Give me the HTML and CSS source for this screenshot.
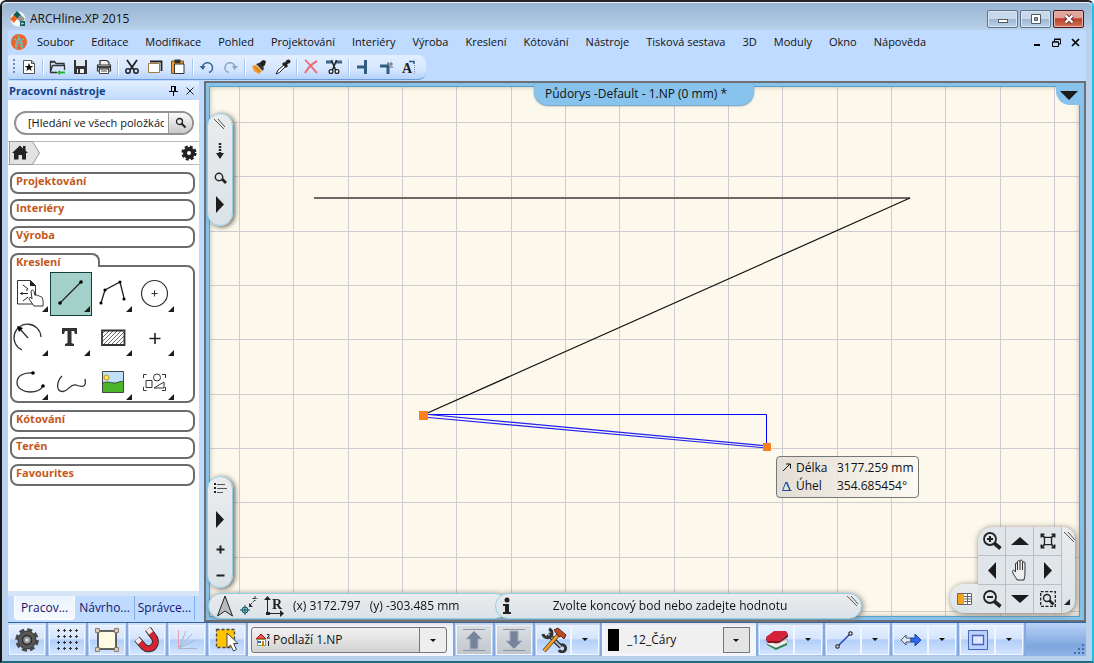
FILE: index.html
```html
<!DOCTYPE html>
<html lang="cs">
<head>
<meta charset="utf-8">
<title>ARCHline.XP 2015</title>
<link rel="stylesheet" href="styles.css">
</head>
<body>
<div class="window">
  <header class="titlebar">
    <svg class="app-icon" width="16" height="16" viewBox="0 0 16 16"><circle cx="8" cy="8" r="7.5" fill="#f4f6f6"/><path d="M7 0l4 4-4 4-4-4z" fill="#0d5c5c"/><path d="M4 4l4 4-4 4-4-4z" fill="#ef6420"/><path d="M11 4l4 4-4 4-4-4z" fill="#8c9494"/><path d="M7 8l4 4-3 3-4-3z" fill="#fff"/><path d="M10 10h5v5h-5z" fill="#145a5a"/><path d="M12 11v3M11 12.500h3" stroke="#9cc" stroke-width="1"/></svg>
    <h1 class="title">ARCHline.XP 2015</h1>
    <div class="win-buttons">
      <button class="win-btn" aria-label="Minimalizovat"><svg width="12" height="10" viewBox="0 0 12 10"><rect x="1.500" y="5.500" width="9" height="3" fill="#fff" stroke="#555b66"/></svg></button>
      <button class="win-btn" aria-label="Maximalizovat"><svg width="12" height="10" viewBox="0 0 12 10"><path d="M1.500.500h9v9h-9z" fill="#fff" stroke="#555b66"/><path d="M4.500 3.500h3v3h-3z" fill="#8fa9c8" stroke="#555b66"/></svg></button>
      <button class="win-btn win-close" aria-label="Zavřít"><svg width="14" height="10" viewBox="0 0 14 10"><path d="M3.500 1.500l7 7M10.500 1.500l-7 7" stroke="#5d3030" stroke-width="4"/><path d="M3.500 1.500l7 7M10.500 1.500l-7 7" stroke="#fff" stroke-width="2.400"/></svg></button>
    </div>
  </header>

  <nav class="menubar">
    <svg class="brand" width="16" height="16" viewBox="0 0 16 16"><circle cx="8" cy="8" r="8" fill="#ee6422"/><path d="M8 1v3M8 4L5 9v6M8 4l3 5v6M5 9h6M6 6h4M4 12h3M9 12h3M3 5l2 1M13 5l-2 1" stroke="#6fb9c0" stroke-width="1.500" fill="none"/></svg>
    <button class="menu">Soubor</button><button class="menu">Editace</button><button class="menu">Modifikace</button><button class="menu">Pohled</button><button class="menu">Projektování</button><button class="menu">Interiéry</button><button class="menu">Výroba</button><button class="menu">Kreslení</button><button class="menu">Kótování</button><button class="menu">Nástroje</button><button class="menu">Tisková sestava</button><button class="menu">3D</button><button class="menu">Moduly</button><button class="menu">Okno</button><button class="menu">Nápověda</button>
    <div class="doc-buttons">
      <button aria-label="Minimalizovat výkres"><svg width="9" height="9" viewBox="0 0 9 9"><path d="M1 6h6v2H1z"/></svg></button>
      <button aria-label="Obnovit výkres"><svg width="9" height="9" viewBox="0 0 9 9"><path d="M2.500 3V1.500h6V6H6.500M2 1h7" stroke="#000" fill="none"/><path d="M.5 4h6v4.500h-6z M.5 3.800h6" stroke="#000" fill="none"/></svg></button>
      <button aria-label="Zavřít výkres"><svg width="9" height="9" viewBox="0 0 9 9"><path d="M1 1l7 7M8 1L1 8" stroke="#000" stroke-width="1.700"/></svg></button>
    </div>
  </nav>

  <div class="toolbar-row">
    <div class="toolbar" role="toolbar" aria-label="Standardní">
      <span class="grip"></span>
      <button class="tb" aria-label="Nový"><svg width="18" height="18" viewBox="0 0 18 18"><path d="M3.500 2.500h8l3 3v10h-11zM11.500 2.500v3h3" fill="#fff" stroke="#555"/><path d="M9 5l1.200 3h3l-2.400 2 .9 3L9 11.200 6.300 13l.9-3-2.400-2h3z" fill="#111"/></svg></button>
      <span class="sep"></span>
      <button class="tb" aria-label="Otevřít"><svg width="18" height="18" viewBox="0 0 18 18"><path d="M1.500 14V3.500h4l1.500 2h8V8M1.500 4h4M3.500 7.500h12V12M1.500 14l2-6.500M1 14.500h7" fill="none" stroke="#333" stroke-width="1.300"/><path d="M8 14.500l3-2.500v1.500h5v2h-5V17z" fill="#19bb22"/></svg></button>
      <button class="tb" aria-label="Uložit"><svg width="18" height="18" viewBox="0 0 18 18"><path d="M2 2h13v14H2z" fill="#333"/><path d="M4 2h9v6H4z" fill="#dfe7f0"/><path d="M5 11h7v4H5z" fill="#f4f4f4"/><path d="M6 11h2v4H6z" fill="#333"/></svg></button>
      <button class="tb" aria-label="Tisk"><svg width="18" height="18" viewBox="0 0 18 18"><path d="M5 7V2.500h7l2 2V7M2.500 7h13v6h-2v-3h-9v3h-2z" fill="#eee" stroke="#333" stroke-width="1.200"/><path d="M3 8h12v2H3z" fill="#444"/><path d="M4.500 11h9v4.500h-9zM6 13h6" fill="#fff" stroke="#444"/></svg></button>
      <span class="sep"></span>
      <button class="tb" aria-label="Vyjmout"><svg width="18" height="18" viewBox="0 0 18 18"><path d="M3 2l7 10M13 2L6 12" stroke="#222" stroke-width="1.800"/><circle cx="4" cy="13" r="2.200" fill="none" stroke="#222" stroke-width="1.500"/><circle cx="12" cy="13" r="2.200" fill="none" stroke="#222" stroke-width="1.500"/></svg></button>
      <button class="tb" aria-label="Kopírovat"><svg width="18" height="18" viewBox="0 0 18 18"><path d="M3 3.500h11.500V13" fill="#fff" stroke="#222" stroke-width="1.800"/><path d="M1.500 5.500h11v9h-11z" fill="#fff" stroke="#a57c40"/></svg></button>
      <button class="tb" aria-label="Vložit"><svg width="18" height="18" viewBox="0 0 18 18"><path d="M1.500 3h12v12.500h-12z" fill="#e89c27" stroke="#7e5520"/><path d="M4.500 6h9.500v9.500H4.500z" fill="#fff" stroke="#333"/><path d="M4.500 1.500h6V5h-6z" fill="#333"/></svg></button>
      <span class="sep"></span>
      <button class="tb" aria-label="Zpět"><svg width="18" height="18" viewBox="0 0 18 18"><path d="M3.500 10a5 5 0 1 1 6.500 4.500" fill="none" stroke="#34658e" stroke-width="1.500"/><path d="M.5 8l3.500 4L6.500 8z" fill="#34658e"/></svg></button>
      <button class="tb" aria-label="Znovu"><svg width="18" height="18" viewBox="0 0 18 18"><path d="M13 10a5 5 0 1 0-6.500 4.500" fill="none" stroke="#8aa5c6" stroke-width="1.500"/><path d="M16 8l-3.500 4L10 8z" fill="#8aa5c6"/></svg></button>
      <span class="sep"></span>
      <button class="tb" aria-label="Kopírovat vlastnosti"><svg width="18" height="18" viewBox="0 0 18 18"><path d="M7 6l5-4 3 1-1 4-4 4z" fill="#222"/><path d="M5 6l3-1 5 5-1 3z" fill="#333"/><path d="M1 8l4-1 6 6-3 3-5-3z" fill="#ef9a2a"/><path d="M4 9l5 5" stroke="#c97312"/></svg></button>
      <button class="tb" aria-label="Kapátko"><svg width="18" height="18" viewBox="0 0 18 18"><path d="M2 16l2-4 6-5 1.500 1.500-6 6z" fill="#fff" stroke="#222"/><path d="M9 5l4 4M11 7l3-4" stroke="#222" stroke-width="3"/><circle cx="14.500" cy="3.500" r="2" fill="#222"/></svg></button>
      <span class="sep"></span>
      <button class="tb" aria-label="Smazat"><svg width="18" height="18" viewBox="0 0 18 18"><path d="M2 2c3 2 8 9 12 13M14 3C10 5 5 10 2 15" fill="none" stroke="#ee6d78" stroke-width="2"/></svg></button>
      <button class="tb" aria-label="Oříznout"><svg width="18" height="18" viewBox="0 0 18 18"><path d="M0 4h6M10 4h6" stroke="#3a6586" stroke-width="3"/><path d="M5.500 2l4 10M10.500 2l-4 10" stroke="#222" stroke-width="1.500"/><circle cx="5" cy="13.500" r="1.900" fill="#fff" stroke="#222" stroke-width="1.300"/><circle cx="11" cy="13.500" r="1.900" fill="#fff" stroke="#222" stroke-width="1.300"/></svg></button>
      <span class="sep"></span>
      <button class="tb" aria-label="Prodloužit"><svg width="18" height="18" viewBox="0 0 18 18"><path d="M10.500 2v14M2 9h8" stroke="#2f5c80" stroke-width="3"/></svg></button>
      <button class="tb" aria-label="Spojit"><svg width="18" height="18" viewBox="0 0 18 18"><path d="M2 8h9M10 7v9" stroke="#2f5c80" stroke-width="3"/><path d="M10 4v4M13 4v4M9 6h6M11 9h4" stroke="#667"/></svg></button>
      <button class="tb" aria-label="Upravit text"><svg width="18" height="18" viewBox="0 0 18 18"><text x="1" y="15" class="glyph-a">A</text><path d="M8 3.500h5V6" stroke="#2f5c80" stroke-width="1.500" fill="none"/><path d="M13.500 7v9" stroke="#88a" stroke-dasharray="1 1"/></svg></button>
    </div>
  </div>

  <main class="workspace">
    <aside class="side">
      <div class="side-head"><h2>Pracovní nástroje</h2>
        <button aria-label="Připnout"><svg width="9" height="10" viewBox="0 0 9 10"><path d="M2.500 0v5M2 .5h4M0 5.500h9M4.500 6v4" stroke="#000" fill="none"/><path d="M5 0h2v5H5z"/></svg></button>
        <button aria-label="Zavřít panel"><svg width="8" height="8" viewBox="0 0 8 8"><path d="M.5.500l7 7M7.500.500l-7 7" stroke="#222"/></svg></button>
      </div>
      <div class="side-body">
        <form class="search">
          <input type="text" aria-label="Hledání" value="[Hledání ve všech položkách]">
          <button type="button" aria-label="Hledat"><svg width="12" height="12" viewBox="0 0 12 12"><circle cx="4.500" cy="4.500" r="3" fill="none" stroke="#222" stroke-width="1.300"/><path d="M6.500 6.500l4 4" stroke="#222" stroke-width="2"/></svg></button>
        </form>
        <div class="crumbs">
          <button class="home" aria-label="Domů"><svg width="31" height="24" viewBox="0 0 31 24"><path d="M.5.500h23l7 11.500-7 11.500H.5z" fill="#e3e3e3" stroke="#999"/><path d="M3 12l8-7.500 3 3V5h2.500v4.500L19 12h-2v6.500h-4V14H9.500v4.500H5V12z" fill="#222"/></svg></button>
          <button class="gear-btn" aria-label="Nastavení panelu"><svg width="16" height="16" viewBox="0 0 16 16"><circle cx="8" cy="8" r="4" fill="none" stroke="#222" stroke-width="4"/><circle cx="8" cy="8" r="6.300" fill="none" stroke="#222" stroke-width="2.600" stroke-dasharray="2.900 2.050"/></svg></button>
        </div>
        <button class="pill">Projektování</button>
        <button class="pill">Interiéry</button>
        <button class="pill">Výroba</button>
        <section class="open-group">
          <button class="group-tab">Kreslení</button>
          <div class="tool-grid">
            <button class="tool" aria-label="Výběr"><svg width="42" height="44" viewBox="0 0 42 44"><path d="M9.500 8.500h13l5 5v18.500h-18z" fill="#fff" stroke="#333"/><path d="M22 8v6h6z" fill="#222"/><path d="M15 13l5 4M12 21.500h8M15 29l5-4" stroke="#222"/><path d="M20 18h-2M14 20v3" stroke="#222"/><path d="M26 34l-5-7c0-2 2-2 3 0l-1-8c1-1.500 2.500-1 3 .5l1 4c1-1 2-1 2.500.5 1-1 2-.5 2.500.8 1-.8 2 0 2.300 1.200.7 2 1.200 5 .7 8z" fill="#fff" stroke="#333"/><path class="corner" d="M40 34v6h-6z"/></svg></button>
            <button class="tool selected" aria-label="Úsečka"><svg width="42" height="44" viewBox="0 0 42 44"><path d="M10 31L31 10" stroke="#222" stroke-width="1.300"/><circle cx="10" cy="31" r="1.800"/><circle cx="31" cy="10" r="1.800"/><path class="corner" d="M40 34v6h-6z"/></svg></button>
            <button class="tool" aria-label="Lomená čára"><svg width="42" height="44" viewBox="0 0 42 44"><path d="M9 31l4-13 15-8 4 16" fill="none" stroke="#222" stroke-width="1.300"/><circle cx="9" cy="31" r="1.600"/><circle cx="13" cy="18" r="1.600"/><circle cx="28" cy="10" r="1.600"/><circle cx="32" cy="27" r="1.600"/><path class="corner" d="M40 34v6h-6z"/></svg></button>
            <button class="tool" aria-label="Kružnice"><svg width="42" height="44" viewBox="0 0 42 44"><circle cx="20.500" cy="21.500" r="13" fill="none" stroke="#333" stroke-width="1.200"/><path d="M20.500 18.500v6M17.500 21.500h6" stroke="#333"/><path class="corner" d="M40 34v6h-6z"/></svg></button>
            <button class="tool" aria-label="Oblouk"><svg width="42" height="44" viewBox="0 0 42 44"><path d="M14 34A13.500 13.500 0 1 1 33 21M12 13l8 9" fill="none" stroke="#333" stroke-width="1.300"/><path d="M9 10l6 2-4 4z"/><path class="corner" d="M40 34v6h-6z"/></svg></button>
            <button class="tool" aria-label="Text"><svg width="42" height="44" viewBox="0 0 42 44"><path d="M12 12h15v6h-2l-1-3h-2.500v12l2.500 1v2h-9v-2l2.500-1V15H15l-1 3h-2z" fill="#333"/><path class="corner" d="M40 34v6h-6z"/></svg></button>
            <button class="tool" aria-label="Šrafa"><svg width="42" height="44" viewBox="0 0 42 44"><path d="M10 14.500h22.500v14.500H10z" fill="url(#hatch)" stroke="#333" stroke-width="1.800"/><path class="corner" d="M40 34v6h-6z"/></svg></button>
            <button class="tool" aria-label="Bod"><svg width="42" height="44" viewBox="0 0 42 44"><path d="M21 17v11M15.500 22.500h11" stroke="#222" stroke-width="1.600"/><path class="corner" d="M40 34v6h-6z"/></svg></button>
            <button class="tool" aria-label="Elipsa"><svg width="42" height="44" viewBox="0 0 42 44"><path d="M25 13C14 12 9 17 9 22.500 9 28 15 32 22 32c6 0 11-2 13-6" fill="none" stroke="#333" stroke-width="1.300"/><circle cx="25" cy="13" r="1.800"/><circle cx="35" cy="26" r="1.800"/><path class="corner" d="M40 34v6h-6z"/></svg></button>
            <button class="tool" aria-label="Křivka"><svg width="42" height="44" viewBox="0 0 42 44"><path d="M12 16c-5 5-7 16 1 15.500 6-.5 7-8 13-6.500 5 2 11 3 9-6" fill="none" stroke="#333" stroke-width="1.300"/></svg></button>
            <button class="tool" aria-label="Obrázek"><svg width="42" height="44" viewBox="0 0 42 44"><path d="M10.500 11.500h21v21h-21z" fill="#bfe2fa"/><circle cx="14.500" cy="17.500" r="2.500" fill="#ffe469" stroke="#c29512"/><path d="M10.500 23c6-2 8 0 12 0s6-3 9-1v10.500h-21z" fill="#48b52b"/><path d="M10.500 23c6-2 8 0 12 0s6-3 9-1M10.500 11.500h21v21h-21z" fill="none" stroke="#444"/><path class="corner" d="M40 34v6h-6z"/></svg></button>
            <button class="tool" aria-label="Bloky"><svg width="42" height="44" viewBox="0 0 42 44"><path d="M9.500 18v-3.500h3M28 14.500h3.500V18M9.500 27v3.500h3M28 30.500h3.500V27M12 20.500h6v7h-6z" fill="none" stroke="#333"/><circle cx="23" cy="17.500" r="3.500" fill="none" stroke="#333"/><path d="M20 28h10v-6z" fill="none" stroke="#333"/><path class="corner" d="M40 34v6h-6z"/></svg></button>
          </div>
        </section>
        <button class="pill">Kótování</button>
        <button class="pill">Terén</button>
        <button class="pill">Favourites</button>
      </div>
      <div class="side-tabs">
        <button class="side-tab active">Pracov...</button>
        <button class="side-tab">Návrho...</button>
        <button class="side-tab">Správce...</button>
      </div>
    </aside>

    <section class="canvas">
      <svg class="drawing" width="100%" height="100%">
        <defs>
          <pattern id="grid" width="163" height="163" patternUnits="userSpaceOnUse" x="29" y="35"><path d="M.5 0v163M54.500 0v163M109.500 0v163M0 .5h163M0 54.500h163M0 109.500h163" stroke="#cdcdcf" fill="none"/></pattern>
          <pattern id="hatch" width="4" height="4" patternUnits="userSpaceOnUse"><path d="M-1 1l2-2M0 4l4-4M3 5l2-2" stroke="#444" stroke-width=".8"/></pattern>
        </defs>
        <rect width="100%" height="100%" fill="#fdf8ec"/>
        <rect width="100%" height="100%" fill="url(#grid)"/>
        <g transform="translate(-210 -87)" fill="none">
          <path d="M314 198h596" stroke="#6f6763" stroke-width="2"/>
          <path d="M910 198L423 415" stroke="#111" stroke-width="1.200"/>
          <path d="M423.500 414.500h343v32" stroke="#00f"/>
          <path d="M423 414l344 32M423 417l344 31" stroke="#2222ee" stroke-width="1.200"/>
          <path d="M419 411h9v9h-9zM763 443h8v8h-8z" fill="#f9801c"/>
        </g>
      </svg>

      <div class="view-title">Půdorys -Default - 1.NP (0 mm) *</div>
      <button class="view-menu" aria-label="Nabídka pohledu"><svg width="18" height="9" viewBox="0 0 18 9"><path d="M0 0h18L9 9z" fill="#1c1c1c"/></svg></button>

      <div class="strip strip-top">
        <svg width="12" height="12" viewBox="0 0 12 12"><path d="M0 1l10 10M4 1l7 8" stroke="#555"/></svg>
        <button aria-label="Dolů"><svg width="10" height="18" viewBox="0 0 10 18"><path d="M5 1v12" stroke="#222" stroke-width="2.500" stroke-dasharray="2 1"/><path d="M1 11h8l-4 6z" fill="#222"/></svg></button>
        <button aria-label="Lupa"><svg width="13" height="12" viewBox="0 0 13 12"><circle cx="5" cy="5" r="3.700" fill="none" stroke="#222" stroke-width="1.400"/><path d="M8 7l4 4" stroke="#222" stroke-width="2.800"/></svg></button>
        <button aria-label="Rozbalit"><svg width="8" height="17" viewBox="0 0 8 17"><path d="M0 0l8 8.500L0 17z" fill="#1c1c1c"/></svg></button>
      </div>
      <div class="strip strip-bottom">
        <button aria-label="Seznam"><svg width="13" height="11" viewBox="0 0 13 11"><path d="M0 0h2v2H0zM0 4h2v2H0zM0 8h2v2H0z" fill="#222"/><path d="M3 1.500h8M3 5.500h10M3 9.500h6" stroke="#555"/></svg></button>
        <button aria-label="Rozbalit"><svg width="8" height="17" viewBox="0 0 8 17"><path d="M0 0l8 8.500L0 17z" fill="#1c1c1c"/></svg></button>
        <button aria-label="Přiblížit"><svg width="9" height="9" viewBox="0 0 9 9"><path d="M4.500.500v8M.5 4.500h8" stroke="#222" stroke-width="2"/></svg></button>
        <button aria-label="Oddálit"><svg width="9" height="9" viewBox="0 0 9 9"><path d="M.5 4.500h8" stroke="#222" stroke-width="2"/></svg></button>
      </div>

      <dl class="measure">
        <dt><svg width="12" height="12" viewBox="0 0 12 12"><path d="M2 9l7-7M5 2h4.500v4.500" fill="none" stroke="#111"/></svg>Délka</dt><dd>3177.259 mm</dd>
        <dt><svg width="12" height="12" viewBox="0 0 12 12"><path d="M5 2L1.500 10.500h9M5 2l4 8.500M6 2l3 8" fill="none" stroke="#1a4a9a"/></svg>Úhel</dt><dd>354.685454°</dd>
      </dl>

      <div class="status">
        <div class="coords">
          <svg class="compass" width="18" height="22" viewBox="0 0 18 22"><path d="M9 1l7.500 20L9 16 1.500 21z" fill="#bbb" stroke="#222"/></svg>
          <svg width="22" height="22" viewBox="0 0 22 22"><path d="M12 10l5-5M17 1v5M14.500 3.500h5" stroke="#333" stroke-dasharray="3 1"/><path d="M11 8v4h4z" fill="#333"/><circle cx="7" cy="15" r="3" fill="#9cc" stroke="#156"/><path d="M7 10v10M2 15h10" stroke="#156"/></svg>
          <svg width="20" height="22" viewBox="0 0 20 22"><path d="M3.500 3v15.500H19" fill="none" stroke="#222"/><path d="M0 5l3.500-4L7 5zM16 15l4 3.500-4 3.500zM2 17h4v3H2z" fill="#222"/><text x="8" y="14" class="glyph-r">R</text></svg>
          <span class="xy">(x) 3172.797</span><span>(y) -303.485 mm</span>
        </div>
        <div class="prompt"><svg class="info" width="8" height="18" viewBox="0 0 8 18"><circle cx="4" cy="3" r="2.500" fill="#222"/><path d="M0 7h6v8h2v2H0v-2h2V9H0z" fill="#222"/></svg><p>Zvolte koncový bod nebo zadejte hodnotu</p><svg class="scratch" width="12" height="12" viewBox="0 0 12 12"><path d="M0 1l10 10M4 1l7 8" stroke="#555"/></svg></div>
      </div>

      <div class="navpad">
        <button class="layout-btn" aria-label="Rozvržení"><svg width="15" height="12" viewBox="0 0 15 12"><path d="M.5.500h14v11H.5zM.5 6h14M6.500 0v12M10.500 0v12M7 3.500h8M7 8.500h8" fill="#fff" stroke="#666"/><path d="M1 1h6v10H1z" fill="#f7a21b"/></svg></button>
        <div class="pad">
          <button aria-label="Zvětšit"><svg width="20" height="20" viewBox="0 0 20 20"><circle cx="8" cy="8" r="6" fill="none" stroke="#222" stroke-width="1.800"/><path d="M8 5v6M5 8h6" stroke="#222" stroke-width="2"/><path d="M12.500 12.500l6 5" stroke="#222" stroke-width="3.600"/></svg></button>
          <button aria-label="Nahoru"><svg width="18" height="9" viewBox="0 0 18 9"><path d="M0 8l9-8 9 8z" fill="#1c1c1c"/></svg></button>
          <button aria-label="Celý výkres"><svg width="16" height="16" viewBox="0 0 18 18"><path d="M5 5h8v8H5z" fill="none" stroke="#222" stroke-width="1.500"/><path d="M1.500 5V1.500H5M13 1.500h3.500V5M1.500 13v3.500H5M13 16.500h3.500V13M2 2l3 3M16 2l-3 3M2 16l3-3M16 16l-3-3" fill="none" stroke="#222" stroke-width="1.800"/></svg></button>
          <button aria-label="Vlevo"><svg width="8" height="17" viewBox="0 0 8 17"><path d="M8 0L0 8.500 8 17z" fill="#1c1c1c"/></svg></button>
          <button aria-label="Posun"><svg width="18" height="22" viewBox="0 0 18 22"><path d="M6 21c-1-3-4-5-4.500-8.500C1.500 11 3 10.500 4.500 13V5c0-1.500 2-1.500 2 0V3c0-2 2.500-2 2.500 0v-.5c0-2 2.500-2 2.500 0V4c0-1.500 2.500-1.500 2.500 0v9c0 4-.5 5-1 8zM6.500 5v6M9 3v8M11.500 3v8" fill="#eee" stroke="#333"/></svg></button>
          <button aria-label="Vpravo"><svg width="8" height="17" viewBox="0 0 8 17"><path d="M0 0l8 8.500L0 17z" fill="#1c1c1c"/></svg></button>
          <button aria-label="Zmenšit"><svg width="20" height="20" viewBox="0 0 20 20"><circle cx="8" cy="8" r="6" fill="none" stroke="#222" stroke-width="1.800"/><path d="M5 8h6" stroke="#222" stroke-width="2"/><path d="M12.500 12.500l6 5" stroke="#222" stroke-width="3.600"/></svg></button>
          <button aria-label="Dolů"><svg width="18" height="9" viewBox="0 0 18 9"><path d="M0 0h18L9 8z" fill="#1c1c1c"/></svg></button>
          <button aria-label="Výřez"><svg width="16" height="16" viewBox="0 0 16 16"><path d="M.7.700h14.600v14.600H.7z" fill="none" stroke="#222" stroke-width="1.300" stroke-dasharray="3 1.500"/><circle cx="7" cy="7" r="3.500" fill="none" stroke="#222" stroke-width="1.400"/><path d="M9.500 9.500l4 4" stroke="#222" stroke-width="2.800"/></svg></button>
        </div>
        <div class="pad-edge"><svg width="11" height="12" viewBox="0 0 11 12"><path d="M0 1l10 10M4 1l7 8" stroke="#555"/></svg><svg width="6" height="6" viewBox="0 0 6 6"><path d="M6 0v6H0z" fill="#222"/></svg></div>
      </div>
    </section>
  </main>

  <footer class="bottombar">
    <div class="cell"><button class="bb" aria-label="Nastavení"><svg width="26" height="26" viewBox="0 0 26 26"><circle cx="13" cy="13" r="9" fill="#565656" stroke="#333"/><circle cx="13" cy="13" r="10.200" fill="none" stroke="#484848" stroke-width="3" stroke-dasharray="5 3"/><circle cx="13" cy="13" r="4.500" fill="#8d8d8d" stroke="#2c2c2c" stroke-width="1.500"/><circle cx="13" cy="13" r="1.800" fill="#cfdcec"/></svg></button></div>
    <div class="cell"><button class="bb" aria-label="Rastr"><svg width="24" height="24" viewBox="0 0 24 24"><path d="M3.500 2v20M9.500 2v20M15.500 2v20M21.500 2v20" stroke="#333" stroke-width="3" stroke-dasharray="1 5"/><path d="M3.500 1v21M9.500 1v21M15.500 1v21M21.500 1v21" stroke="#333" stroke-dasharray="3 3"/></svg></button></div>
    <div class="cell"><button class="bb" aria-label="Úchopové body"><svg width="24" height="24" viewBox="0 0 24 24"><path d="M3 3h18v18H3z" fill="#fffbe4" stroke="#333" stroke-width="1.500"/><path d="M.5.500h4v4h-4zM19.500.500h4v4h-4zM.5 19.500h4v4h-4zM19.500 19.500h4v4h-4z" fill="#dacdbf" stroke="#8d7c6d"/></svg></button></div>
    <div class="cell"><button class="bb" aria-label="Magnet"><svg width="26" height="26" viewBox="0 0 26 26"><path d="M3 12l7 8c3 3 8 2 10-1s2-7-1-10l-5-7" fill="none" stroke="#333" stroke-width="7"/><path d="M3 12l7 8c3 3 8 2 10-1s2-7-1-10l-5-7" fill="none" stroke="#d92331" stroke-width="5"/><path d="M3 12l3 3.500M14 2l3 4" stroke="#eee" stroke-width="5"/></svg></button></div>
    <div class="cell"><button class="bb" aria-label="Úhly"><svg width="22" height="22" viewBox="0 0 22 22"><path d="M2.500 1v19" stroke="#e3a5ab"/><path d="M3 19.500h18M3 19L10 2M3 19L16 5M3 19l16-8" stroke="#a9b6c9"/></svg></button></div>
    <div class="cell"><button class="bb" aria-label="Výběr"><svg width="24" height="24" viewBox="0 0 24 24"><path d="M1.500 1.500h18v18h-18z" fill="#ffc400" stroke="#444" stroke-width="1.300" stroke-dasharray="3 2"/><path d="M12 5v15l3.500-3 3 6 3-1.500-3-6h4.500z" fill="#fff" stroke="#444"/></svg></button></div>
    <div class="cell combo-cell"><label class="combo floor"><svg width="15" height="14" viewBox="0 0 15 14"><path d="M0 6l5-5 5 5z" fill="#e55" stroke="#a11"/><path d="M1.500 6.500h8v6h-8z" fill="#fff" stroke="#7a3"/><path d="M2 8h3v2H2z" fill="#36a"/><path d="M6 8h2v5H6z" fill="#c80"/><path d="M11 1.500h2v1.500l-2 2h3M12.500 8v5" fill="none" stroke="#222"/></svg><select aria-label="Podlaží"><option>Podlaží 1.NP</option></select></label></div>
    <div class="cell"><button class="bb dim" aria-label="O podlaží výš"><svg width="24" height="24" viewBox="0 0 24 24"><path d="M1 1.500h22M1 22.500h22" stroke="#8c97a8"/><path d="M12 3l8 8h-4v10H8V11H4z" fill="#76839a" stroke="#a5afbe"/></svg></button></div>
    <div class="cell"><button class="bb dim" aria-label="O podlaží níž"><svg width="24" height="24" viewBox="0 0 24 24"><path d="M1 1.500h22M1 22.500h22" stroke="#8c97a8"/><path d="M12 21l8-8h-4V3H8v10H4z" fill="#76839a" stroke="#a5afbe"/></svg></button></div>
    <div class="cell"><button class="bb" aria-label="Nástroje"><svg width="26" height="26" viewBox="0 0 26 26"><path d="M7 7l13 13" stroke="#222" stroke-width="4.500"/><path d="M7 7l13 13" stroke="#aeb6bf" stroke-width="2"/><path d="M8 2a4.500 4.500 0 1 1-6 5M20 18a3.500 3.500 0 1 1-2 5" fill="none" stroke="#333" stroke-width="3"/><path d="M17 8L3 24" stroke="#6b3b0c" stroke-width="4"/><path d="M17 8L3 24" stroke="#f5a52c" stroke-width="2.500"/><path d="M13 3l4-2 8 7-2 4-3-3-2 1z" fill="#bc4a27" stroke="#5c2715"/></svg></button><button class="drop" aria-label="Další nástroje"></button></div>
    <div class="cell combo-cell"><label class="combo layer"><i class="swatch"></i><select aria-label="Vrstva"><option>_12_Čáry</option></select></label></div>
    <div class="cell"><button class="bb" aria-label="Materiál"><svg width="24" height="22" viewBox="0 0 24 22"><path d="M2 13l9 5 11-5v3l-11 5-9-5z" fill="#1c8a45"/><path d="M2 10l9 5 11-5v4l-11 5-9-4z" fill="#eee" stroke="#777" stroke-width=".5"/><path d="M1 8l8-6h12l2 3-9 7H3z" fill="#d52439"/><path d="M1 8v3l2 3h11l9-6V5l-9 7H3z" fill="#891421"/></svg></button><button class="drop" aria-label="Volby materiálu"></button></div>
    <div class="cell"><button class="bb" aria-label="Typ čáry"><svg width="18" height="18" viewBox="0 0 18 18"><path d="M3 15L15 3" stroke="#2940b8" stroke-width="1.500"/><path d="M1 14h3v3H1zM14 1h3v3h-3z" fill="#fff" stroke="#111"/></svg></button><button class="drop" aria-label="Volby čáry"></button></div>
    <div class="cell"><button class="bb" aria-label="Směr"><svg width="22" height="14" viewBox="0 0 22 14"><path d="M1 7l5-5v3h5v4H6v3z" fill="#e3e8ef" stroke="#456"/><path d="M21 7l-6-6v4h-4v4h4v4z" fill="#2d68ee" stroke="#1e45a5"/></svg></button><button class="drop" aria-label="Volby směru"></button></div>
    <div class="cell"><button class="bb" aria-label="Obrys"><svg width="20" height="20" viewBox="0 0 20 20"><path d="M.5.500h19v19H.5z" fill="#bbd0ff" stroke="#4466b5"/><path d="M4.500 5.500h11v9h-11z" fill="#dce8ff" stroke="#4466b5" stroke-width="1.300"/></svg></button><button class="drop" aria-label="Volby obrysu"></button></div>
    <svg class="resize" width="11" height="11" viewBox="0 0 11 11"><path d="M8 0h2v2H8zM4 4h2v2H4zM8 4h2v2H8zM0 8h2v2H0zM4 8h2v2H4zM8 8h2v2H8z" fill="#416db0"/></svg>
  </footer>
</div>
</body>
</html>
```
FILE: styles.css
```css
* { box-sizing: border-box; }

body {
  margin: 0;
  font: 11px/16px "Open Sans", "Noto Sans", sans-serif;
  color: #111;
}

button, select, input {
  font: inherit;
  color: inherit;
  margin: 0;
  padding: 0;
  border: 0;
  background: none;
}

button {
  display: flex;
  align-items: center;
  justify-content: center;
  white-space: nowrap;
}

svg { display: block; flex: none; }
h1, h2, p, dl, dt, dd { margin: 0; font-size: inherit; font-weight: inherit; }

.window {
  height: 100vh;
  display: flex;
  flex-direction: column;
  padding: 0 6px 5px;
  background: #b9d1ea;
  border: 2px solid #181818;
  border-top-color: #292328;
  border-right-color: #25bde0;
  border-bottom-color: #1b6f80;
  border-radius: 6px 6px 0 0;
}

/* Title bar */
.titlebar {
  display: flex;
  align-items: center;
  gap: 4px;
  height: 28px;
  margin: 0 -6px;
  padding: 4px 8px 0;
  background: linear-gradient(#98b4d2, #b8d0e9);
  border-top: 1px solid #e9f2fa;
  border-radius: 5px 5px 0 0;
}
.title { font-size: 12px; flex: 1; }
.win-buttons { display: flex; gap: 2px; }
.win-btn {
  width: 31px;
  height: 18px;
  border: 1px solid #5f718d;
  border-radius: 2px;
  background: linear-gradient(#c8d8ea 48%, #9db5d0 50%, #b9d0e8);
  box-shadow: inset 0 0 0 1px #d9e6f3;
}
.win-close {
  border-color: #4b1219;
  background: linear-gradient(#e2a49b 40%, #bc3f29 50%, #d2755c);
  box-shadow: inset 0 0 0 1px #e8b4a8;
}

/* Menu */
.menubar {
  display: flex;
  align-items: center;
  gap: 1px;
  height: 24px;
  padding: 0 6px 0 3px;
  background: #bfdbff;
}
.brand { margin-right: 1px; }
.menu { padding: 0 8px; }
.doc-buttons { display: flex; gap: 10px; margin-left: auto; }

/* Main toolbar */
.toolbar-row { height: 27px; background: #bfdbff; padding-top: 1px; }
.toolbar {
  display: flex;
  align-items: center;
  width: 418px;
  height: 25px;
  background: linear-gradient(#e3efff, #d5e6ff 60%, #b5d2fa);
  border-bottom: 1px solid #6a98d8;
  border-radius: 3px 8px 8px 3px;
}
.grip {
  width: 2px;
  height: 16px;
  margin: 0 2px 0 5px;
  background: repeating-linear-gradient(#6b8fc4 0 2px, transparent 2px 4px);
}
.tb { width: 23px; height: 22px; }
.sep { width: 6px; height: 16px; padding: 0 2px; background: linear-gradient(90deg, #a9c6ef 0 1px, #fff 1px) content-box; }
.glyph-a, .glyph-r { font: bold 14px "Liberation Serif", serif; fill: #222; }

/* Workspace */
.workspace { flex: 1; min-height: 0; display: flex; gap: 5px; background: #bfdbff; }
.side { width: 191px; display: flex; flex-direction: column; }
.side-head {
  display: flex;
  align-items: center;
  gap: 8px;
  height: 19px;
  padding: 0 5px 0 1px;
  background: linear-gradient(#e3efff, #c0d9fb);
}
.side-head h2 { flex: 1; font-weight: 700; color: #15428b; }
.side-body {
  flex: 1;
  min-height: 0;
  display: flex;
  flex-direction: column;
  gap: 5px;
  padding: 11px 4px 0 1px;
  background: #fff;
}
.search {
  display: flex;
  height: 24px;
  margin: 0 1px 1px 5px;
  border: 2px solid #929292;
  border-radius: 12px;
  overflow: hidden;
}
.search input { flex: 1; min-width: 0; margin-right: 4px; padding-left: 12px; outline: 0; }
.search button { width: 24px; border-left: 1px solid #999; background: linear-gradient(#fafafa, #c9c9c9); }
.crumbs {
  display: flex;
  justify-content: space-between;
  align-items: center;
  height: 24px;
  margin: 0 -4px 2px -1px;
  padding: 0 2px 0 1px;
  border: solid #bbb;
  border-width: 1px 0;
}
.pill, .group-tab {
  display: block;
  padding: 0 0 0 4px;
  border: 2px solid #6c6c6c;
  background: #fff;
  text-align: left;
  line-height: 14px;
  font-weight: 700;
  color: #c4581c;
}
.pill { height: 22px; margin-left: 1px; padding-bottom: 4px; border-radius: 8px; }
.open-group { margin-left: 1px; padding-bottom: 2px; }
.group-tab {
  position: relative;
  width: 90px;
  height: 14px;
  margin-bottom: -2px;
  border-bottom: 0;
  border-radius: 8px 8px 0 0;
}
.tool-grid {
  display: grid;
  grid-template-columns: 38px repeat(3, 42px);
  grid-template-rows: 44px 44px 41px;
  padding: 5px 0 0;
  border: 2px solid #6c6c6c;
  border-radius: 0 8px 8px 8px;
}
.tool { align-items: flex-start; justify-content: flex-end; }
.selected { background: #a3d1ca; outline: 1px solid #163f3b; outline-offset: -1px; }
.corner { fill: #1c1c1c; }
.side-tabs {
  display: flex;
  height: 31px;
  padding: 0 4px 2px 6px;
  border-top: 5px solid #d5e4f7;
}
.side-tab { flex: 1; border-right: 1px solid #86aee2; color: #15156b; font-size: 12px; }
.side-tab.active {
  background: linear-gradient(#eaf3ff, #f6faff);
  border: 1px solid #fff;
  border-top: 0;
  border-radius: 0 0 4px 4px;
}

/* Drawing area */
.canvas {
  flex: 1;
  min-width: 0;
  position: relative;
  border: 6px solid #85c3eb;
  border-right-width: 7px;
  outline: 2px solid #6c7074;
  outline-offset: -2px;
}
.drawing { position: absolute; inset: 0; }
.canvas::after {
  content: "";
  position: absolute;
  inset: 0;
  pointer-events: none;
  box-shadow: inset 0 0 5px #8b817088, 0 0 0 1px #5ba0cd;
}
.view-title {
  position: absolute;
  z-index: 1;
  top: -3px;
  left: 324px;
  width: 220px;
  height: 21px;
  background: #87c3ec;
  border-radius: 0 0 14px 14px;
  box-shadow: 0 1px 2px #5d90b3;
  text-align: center;
  font-size: 12px;
  line-height: 20px;
  padding-right: 16px;
}
.view-menu {
  position: absolute;
  z-index: 1;
  top: -2px;
  right: -3px;
  width: 26px;
  height: 20px;
  background: #87c3ec;
  border-radius: 0 0 0 14px;
}

.strip, .coords, .prompt, .pad-edge, .layout-btn { background: linear-gradient(#eaebec, #dbe3e8); }
.strip {
  position: absolute;
  z-index: 1;
  left: -3px;
  width: 26px;
  display: flex;
  flex-direction: column;
  align-items: center;
  border: 1px solid #8fd0ef;
  border-radius: 13px;
  box-shadow: 2px 1px 5px #6d6659;
}
.strip-top { top: 26px; height: 113px; gap: 12px; padding-top: 4px; }
.strip-bottom { bottom: 28px; height: 112px; gap: 17px; padding-top: 6px; }

.measure {
  position: absolute;
  top: 369px;
  left: 566px;
  display: grid;
  grid-template-columns: 56px auto;
  line-height: 18px;
  font-size: 12px;
  padding: 2px 4px;
  border: 1px solid #777;
  border-radius: 4px;
  background: linear-gradient(90deg, #dedad2dd, #fdfaf2ee);
}
.measure dt { display: flex; align-items: center; gap: 3px; }

.status {
  position: absolute;
  z-index: 1;
  left: -2px;
  bottom: -3px;
  display: flex;
  height: 26px;
  filter: drop-shadow(1px 1px 3px #7d766d);
}
.coords, .prompt { display: flex; align-items: center; border: 1px solid #8fd0ef; border-radius: 13px; font-size: 12px; }
.coords { width: 300px; padding-left: 7px; gap: 4px; }
.xy { margin: 0 5px; }
.prompt { position: relative; width: 367px; margin-left: -13px; padding-left: 7px; }
.prompt p { flex: 1; text-align: center; padding-right: 32px; }
.scratch { position: absolute; right: 2px; top: 1px; }

.navpad {
  position: absolute;
  z-index: 1;
  right: 4px;
  bottom: 3px;
  display: flex;
  align-items: flex-end;
  filter: drop-shadow(1px 1px 3px #7d766d);
}
.layout-btn { width: 28px; height: 29px; border-radius: 14px 0 0 14px; }
.pad {
  display: grid;
  grid-template-columns: repeat(3, 27px);
  grid-auto-rows: 28px;
  gap: 1px;
  background: #b9bfc2;
  border-radius: 14px 0 0 0;
  overflow: hidden;
}
.pad button { background: #dfe5e8; }
.pad-edge {
  width: 14px;
  height: 86px;
  display: flex;
  flex-direction: column;
  justify-content: space-between;
  padding: 4px 0 8px 2px;
  border-left: 1px solid #b9bfc2;
  border-radius: 0 12px 12px 0;
}

/* Bottom bar */
.bottombar {
  display: flex;
  height: 34px;
  border-top: 1px solid #2d62a8;
  background: linear-gradient(#b9d2f7, #7ea7df 70%, #8fb4e6);
}
.cell {
  display: flex;
  align-items: center;
  padding: 0 1px;
  border-right: 2px solid #86aae0;
  background: linear-gradient(#cfe0fa, #a8c6f2);
}
.bb, .drop {
  width: 36px;
  height: 30px;
  background: linear-gradient(#e5f0ff, #d5e5fd 45%, #b1cffa 50%, #d3e4ff);
  border: 1px solid #f2f7ff;
}
.bb.dim { background: linear-gradient(#dcdfe3, #c1c6cd); }
.drop { width: 28px; }
.drop::after, .combo::after {
  content: "";
  border: 3px solid transparent;
  border-top-color: #111;
  border-bottom: 0;
}
.bb:not(:last-child) { width: 35px; }
.combo { position: relative; display: flex; align-items: center; height: 28px; font-size: 12px; }
.combo::after { position: absolute; right: 11px; top: 13px; pointer-events: none; }
.combo select {
  appearance: none;
  flex: 1;
  height: 26px;
}
.combo-cell { background: #f2f5fa; padding: 0 6px 0 3px; }
.floor { width: 196px; }
.floor svg, .swatch { position: absolute; left: 5px; pointer-events: none; }
.floor select {
  padding-left: 21px;
  border-radius: 3px;
  border: 1px solid #777;
  background: linear-gradient(90deg, transparent 167px, #777 167px 168px, #eee 168px), linear-gradient(#f2f2f2, #d2d2d2);
}
.layer { width: 145px; }
.swatch { left: 3px; width: 11px; height: 22px; background: #000; }
.layer select {
  padding-left: 22px;
  background: linear-gradient(#777, #777) 118px 0 / 27px 1px no-repeat,
    linear-gradient(#777, #777) 118px 100% / 27px 1px no-repeat,
    linear-gradient(90deg, #f0f0f0 118px, #777 118px 119px, #e4e4e4 119px 144px, #777 144px);
}
.resize { margin: auto 1px 1px auto; }
```
